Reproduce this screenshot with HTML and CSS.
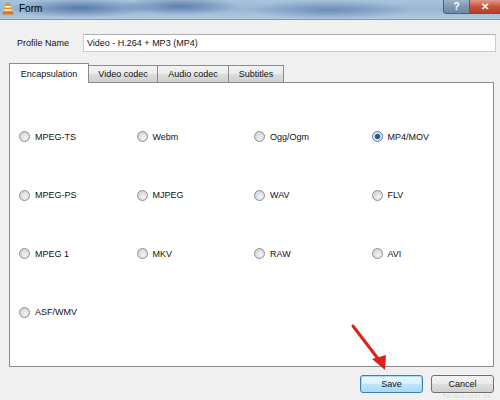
FILE: index.html
```html
<!DOCTYPE html>
<html>
<head>
<meta charset="utf-8">
<link rel="stylesheet" href="styles.css">
</head>
<body>
<div class="window">
  <div class="titlebar">
    <svg class="app-icon" width="12" height="13" viewBox="0 0 12 13">
      <path d="M4.3 1 L7.7 1 L10.3 10 L1.7 10 Z" fill="#f08a1c"/>
      <path d="M3.6 4 L8.4 4 L8.9 5.6 L3.1 5.6 Z" fill="#fff"/>
      <path d="M2.7 7.2 L9.3 7.2 L9.8 8.8 L2.2 8.8 Z" fill="#fff"/>
      <rect x="0.5" y="10" width="11" height="2.5" rx="0.8" fill="#e07812"/>
    </svg>
    <span class="title">Form</span>
    <div class="controls">
      <div class="ctl help">?</div>
      <div class="ctl close">✕</div>
    </div>
  </div>
  <div class="main">
    <div class="profile">
      <label class="profile-label">Profile Name</label>
      <div class="input">Video - H.264 + MP3 (MP4)</div>
    </div>
    <div class="tabs">
      <div class="tab active">Encapsulation</div>
      <div class="tab">Video codec</div>
      <div class="tab">Audio codec</div>
      <div class="tab">Subtitles</div>
    </div>
    <div class="panel">
      <div class="grid">
        <div class="opt"><span class="radio"></span>MPEG-TS</div>
        <div class="opt"><span class="radio"></span>Webm</div>
        <div class="opt"><span class="radio"></span>Ogg/Ogm</div>
        <div class="opt"><span class="radio checked"></span>MP4/MOV</div>
        <div class="opt"><span class="radio"></span>MPEG-PS</div>
        <div class="opt"><span class="radio"></span>MJPEG</div>
        <div class="opt"><span class="radio"></span>WAV</div>
        <div class="opt"><span class="radio"></span>FLV</div>
        <div class="opt"><span class="radio"></span>MPEG 1</div>
        <div class="opt"><span class="radio"></span>MKV</div>
        <div class="opt"><span class="radio"></span>RAW</div>
        <div class="opt"><span class="radio"></span>AVI</div>
        <div class="opt"><span class="radio"></span>ASF/WMV</div>
      </div>
    </div>
    <div class="buttons">
      <div class="btn save">Save</div>
      <div class="btn">Cancel</div>
    </div>
  </div>
  <svg class="arrow" width="50" height="60" viewBox="0 0 50 60">
    <line x1="3" y1="3" x2="29" y2="37" stroke="#d9241c" stroke-width="3" stroke-linecap="round"/>
    <path d="M22 36 L36 32 L35 47 Z" fill="#d9241c"/>
  </svg>
  <div class="watermark">Taimienphi.vn</div>
</div>
</body>
</html>
```

FILE: styles.css
```css
html, body {
  margin: 0;
  padding: 0;
}
body {
  width: 500px;
  height: 400px;
  overflow: hidden;
  background: #f0f0f0;
  font-family: "Liberation Sans", Arial, sans-serif;
  font-size: 9px;
  color: #111;
}
.window {
  position: relative;
  width: 500px;
  height: 400px;
}
.titlebar {
  height: 20px;
  display: flex;
  align-items: center;
  border-bottom: 1px solid #7f98b3;
  box-sizing: border-box;
  background:
    radial-gradient(ellipse 70px 10px at 80px 8px, rgba(45,85,140,0.6), transparent),
    radial-gradient(ellipse 60px 9px at 180px 6px, rgba(40,80,135,0.55), transparent),
    radial-gradient(ellipse 80px 10px at 330px 10px, rgba(60,100,155,0.5), transparent),
    linear-gradient(180deg, #a9c3dd 0%, #98b6d4 50%, #b2cae2 100%);
}
.app-icon {
  margin-left: 2px;
  margin-top: -3px;
}
.title {
  margin-left: 5px;
  margin-top: -2px;
  font-size: 10px;
  color: #000;
}
.controls {
  margin-left: auto;
  align-self: flex-start;
  display: flex;
}
.ctl {
  height: 14px;
  display: flex;
  align-items: center;
  justify-content: center;
  color: #fff;
  font-size: 10px;
  font-weight: bold;
  box-sizing: border-box;
  border: 1px solid #4d5f73;
  border-top: none;
}
.help {
  width: 27px;
  border-radius: 0 0 0 4px;
  background: linear-gradient(180deg, #9fb4c9 0%, #7f97af 50%, #6f88a2 100%);
}
.close {
  width: 30px;
  border-left: none;
  border-right: none;
  background: linear-gradient(180deg, #e09a8c 0%, #c9553f 50%, #b83c24 100%);
}
.main {
  padding: 0 6px 0 9px;
}
.profile {
  display: flex;
  align-items: center;
  margin-top: 14px;
}
.profile-label {
  width: 66px;
  padding-left: 8px;
}
.input {
  flex: 1;
  height: 18px;
  box-sizing: border-box;
  border: 1px solid #c8cdd4;
  border-top-color: #abadb3;
  background: #fff;
  padding-left: 3px;
  display: flex;
  align-items: center;
  margin-right: -2px;
}
.tabs {
  display: flex;
  align-items: flex-end;
  margin-top: 12px;
  height: 18px;
}
.tab {
  height: 17px;
  box-sizing: border-box;
  border: 1px solid #898c95;
  border-bottom: none;
  border-right: none;
  background: linear-gradient(180deg, #f2f2f2 0%, #ebebeb 50%, #dddddd 51%, #cfcfcf 100%);
  display: flex;
  align-items: center;
  justify-content: center;
  padding: 0 9px;
}
.tab:nth-child(4) {
  border-right: 1px solid #898c95;
  width: 56px;
}
.tab:nth-child(2) { width: 69px; }
.tab:nth-child(3) { width: 71px; }
.tab.active {
  width: 80px;
  background: #fff;
  border-right: 1px solid #898c95;
  margin-right: -1px;
  position: relative;
  z-index: 1;
  margin-bottom: -1px;
  height: 20px;
}
.panel {
  width: 485px;
  height: 285px;
  box-sizing: border-box;
  border: 1px solid #898c95;
  background: #fff;
}
.grid {
  display: grid;
  grid-template-columns: repeat(4, 117.5px);
  grid-auto-rows: 58.5px;
  padding: 47px 0 0 9px;
}
.opt {
  display: flex;
  align-items: center;
  height: 13px;
}
.radio {
  width: 11px;
  height: 11px;
  box-sizing: border-box;
  border-radius: 50%;
  border: 1px solid #8f8f8f;
  background: radial-gradient(circle at 60% 65%, #f4f4f4 0%, #dcdcdc 55%, #c9c9c9 100%);
  margin-right: 5px;
}
.radio.checked {
  border-color: #4d7598;
  background: radial-gradient(circle, #1f4d7d 0, #2f6da3 2.5px, #dfe9f3 3.2px, #eef3f8 100%);
}
.buttons {
  display: flex;
  justify-content: flex-end;
  gap: 8px;
  margin-top: 8px;
}
.btn {
  width: 63px;
  height: 18px;
  box-sizing: border-box;
  border: 1px solid #707070;
  border-radius: 3px;
  background: linear-gradient(180deg, #f3f3f3 0%, #ebebeb 50%, #dddddd 51%, #cfcfcf 100%);
  display: flex;
  align-items: center;
  justify-content: center;
}
.btn.save {
  border-color: #3c7fb1;
  box-shadow: inset 0 0 0 1px #a7dcf3;
  background: linear-gradient(180deg, #eaf6fd 0%, #d9f0fc 50%, #bee6fd 51%, #a7d9f5 100%);
}
.arrow {
  position: absolute;
  left: 350px;
  top: 323px;
}
.watermark {
  position: absolute;
  right: 8px;
  top: 393px;
  font-size: 6px;
  line-height: 7px;
  color: rgba(150,150,150,0.35);
  letter-spacing: 1px;
}
```
